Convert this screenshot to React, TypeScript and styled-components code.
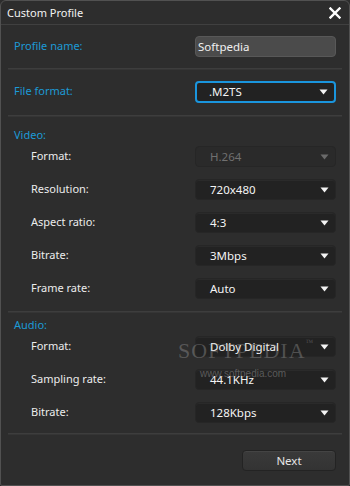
import React from "react";
import styled, { createGlobalStyle } from "styled-components";

const Global = createGlobalStyle`
  html, body { margin: 0; padding: 0; background: #2d2d2d; }
  body { font-family: "Noto Sans", "Open Sans", sans-serif; font-size: 11px; }
  * { box-sizing: border-box; }
`;

const Window = styled.div`
  position: relative;
  width: 350px;
  height: 486px;
  background: #2d2d2d;
  border: 1px solid #515151;
  border-radius: 6px 6px 2px 2px;
  display: flex;
  flex-direction: column;
  overflow: hidden;
`;

const TitleBar = styled.div`
  height: 24px;
  flex: none;
  display: flex;
  align-items: center;
  justify-content: space-between;
  padding: 0 8px 0 6px;
  border-bottom: 1px solid #404040;
`;

const Title = styled.span`
  color: #f2f2f2;
  font-size: 11px;
`;

const Close = styled.svg`
  width: 12px;
  height: 12px;
`;

const Section = styled.div<{ $pt: number; $pb: number }>`
  display: flex;
  flex-direction: column;
  gap: 12px;
  padding: ${(p) => p.$pt}px 13px ${(p) => p.$pb}px 13px;
`;

const Separator = styled.div`
  height: 2px;
  margin: 0 7px;
  border-top: 1px solid #3d3d3d;
  border-bottom: 1px solid #353535;
  flex: none;
`;

const Row = styled.div<{ $indent?: boolean }>`
  display: flex;
  align-items: center;
  justify-content: space-between;
  height: 21px;
  padding-left: ${(p) => (p.$indent ? 17 : 0)}px;
`;

const Label = styled.span<{ $accent?: boolean }>`
  color: ${(p) => (p.$accent ? "#1c9ad6" : "#ececec")};
  font-size: 11px;
  margin-top: -3px;
`;

const Heading = styled.div`
  color: #1c9ad6;
  font-size: 11px;
  height: 16px;
  line-height: 16px;
  margin-bottom: -9px;
`;

const TextBox = styled.div`
  width: 141px;
  height: 21px;
  background: #4b4b4b;
  border: 1px solid #585858;
  border-radius: 4px;
  color: #f0f0f0;
  font-size: 11.5px;
  line-height: 19px;
  padding-left: 2px;
`;

const Select = styled.div<{ $focus?: boolean; $disabled?: boolean }>`
  width: 141px;
  height: ${(p) => (p.$focus ? 22 : 21)}px;
  display: flex;
  align-items: center;
  justify-content: space-between;
  padding: 0 6px 0 ${(p) => (p.$focus ? 12 : 14)}px;
  background: ${(p) => (p.$disabled ? "#2a2a2a" : "#222222")};
  border: ${(p) => (p.$focus ? "2px solid #1a95dd" : "1px solid #262626")};
  border-radius: 4px;
  box-shadow: ${(p) => (p.$focus ? "none" : "inset 0 1px 0 #2a2a2a")};
  color: ${(p) => (p.$disabled ? "#707070" : "#f4f4f4")};
  font-size: 11.5px;
`;

const Arrow = styled.svg<{ $disabled?: boolean }>`
  width: 9px;
  height: 6px;
  fill: ${(p) => (p.$disabled ? "#6a6a6a" : "#f4f4f4")};
`;

const Footer = styled.div`
  display: flex;
  justify-content: flex-end;
  padding: 15px 13px 0 0;
`;

const Button = styled.button`
  width: 94px;
  height: 21px;
  background: linear-gradient(#3a3a3a, #333333);
  border: 1px solid #232323;
  border-radius: 4px;
  box-shadow: inset 0 1px 0 #444;
  color: #e6e6e6;
  font-family: inherit;
  font-size: 11.5px;
  padding: 0;
`;

const Watermark = styled.div`
  position: absolute;
  left: 177px;
  top: 337px;
  color: rgba(200, 200, 200, 0.28);
  font-family: "Liberation Serif", serif;
  font-size: 22px;
  letter-spacing: 1px;
  pointer-events: none;
`;

const WatermarkUrl = styled.div`
  position: absolute;
  left: 199px;
  top: 367px;
  color: rgba(200, 200, 200, 0.35);
  font-family: "Liberation Sans", sans-serif;
  font-size: 10px;
  pointer-events: none;
`;

const Tm = styled.sup`
  font-size: 8px;
  vertical-align: top;
`;

function Dropdown({ value, focus, disabled }: { value: string; focus?: boolean; disabled?: boolean }) {
  return (
    <Select $focus={focus} $disabled={disabled}>
      <span>{value}</span>
      <Arrow $disabled={disabled} viewBox="0 0 9 6">
        <path d="M0.5 0.5 H8.5 L4.5 5.5 Z" />
      </Arrow>
    </Select>
  );
}

const video: [string, string, boolean?][] = [
  ["Format:", "H.264", true],
  ["Resolution:", "720x480"],
  ["Aspect ratio:", "4:3"],
  ["Bitrate:", "3Mbps"],
  ["Frame rate:", "Auto"],
];

const audio: [string, string][] = [
  ["Format:", "Dolby Digital"],
  ["Sampling rate:", "44.1KHz"],
  ["Bitrate:", "128Kbps"],
];

export default function App() {
  return (
    <>
      <Global />
      <Window>
        <TitleBar>
          <Title>Custom Profile</Title>
          <Close viewBox="0 0 12 12">
            <path d="M1.5 1.5 L10.5 10.5 M10.5 1.5 L1.5 10.5" stroke="#ffffff" strokeWidth="2.4" strokeLinecap="square" />
          </Close>
        </TitleBar>
        <Section $pt={11} $pb={11}>
          <Row>
            <Label $accent>Profile name:</Label>
            <TextBox>Softpedia</TextBox>
          </Row>
        </Section>
        <Separator />
        <Section $pt={11} $pb={13}>
          <Row>
            <Label $accent>File format:</Label>
            <Dropdown value=".M2TS" focus />
          </Row>
        </Section>
        <Separator />
        <Section $pt={10} $pb={12}>
          <Heading>Video:</Heading>
          {video.map(([l, v, d]) => (
            <Row $indent key={l}>
              <Label>{l}</Label>
              <Dropdown value={v} disabled={d} />
            </Row>
          ))}
        </Section>
        <Separator />
        <Section $pt={4} $pb={10}>
          <Heading>Audio:</Heading>
          {audio.map(([l, v]) => (
            <Row $indent key={l}>
              <Label>{l}</Label>
              <Dropdown value={v} />
            </Row>
          ))}
        </Section>
        <Separator />
        <Footer>
          <Button>Next</Button>
        </Footer>
        <Watermark>
          SOFTPEDIA<Tm>™</Tm>
        </Watermark>
        <WatermarkUrl>www.softpedia.com</WatermarkUrl>
      </Window>
    </>
  );
}
